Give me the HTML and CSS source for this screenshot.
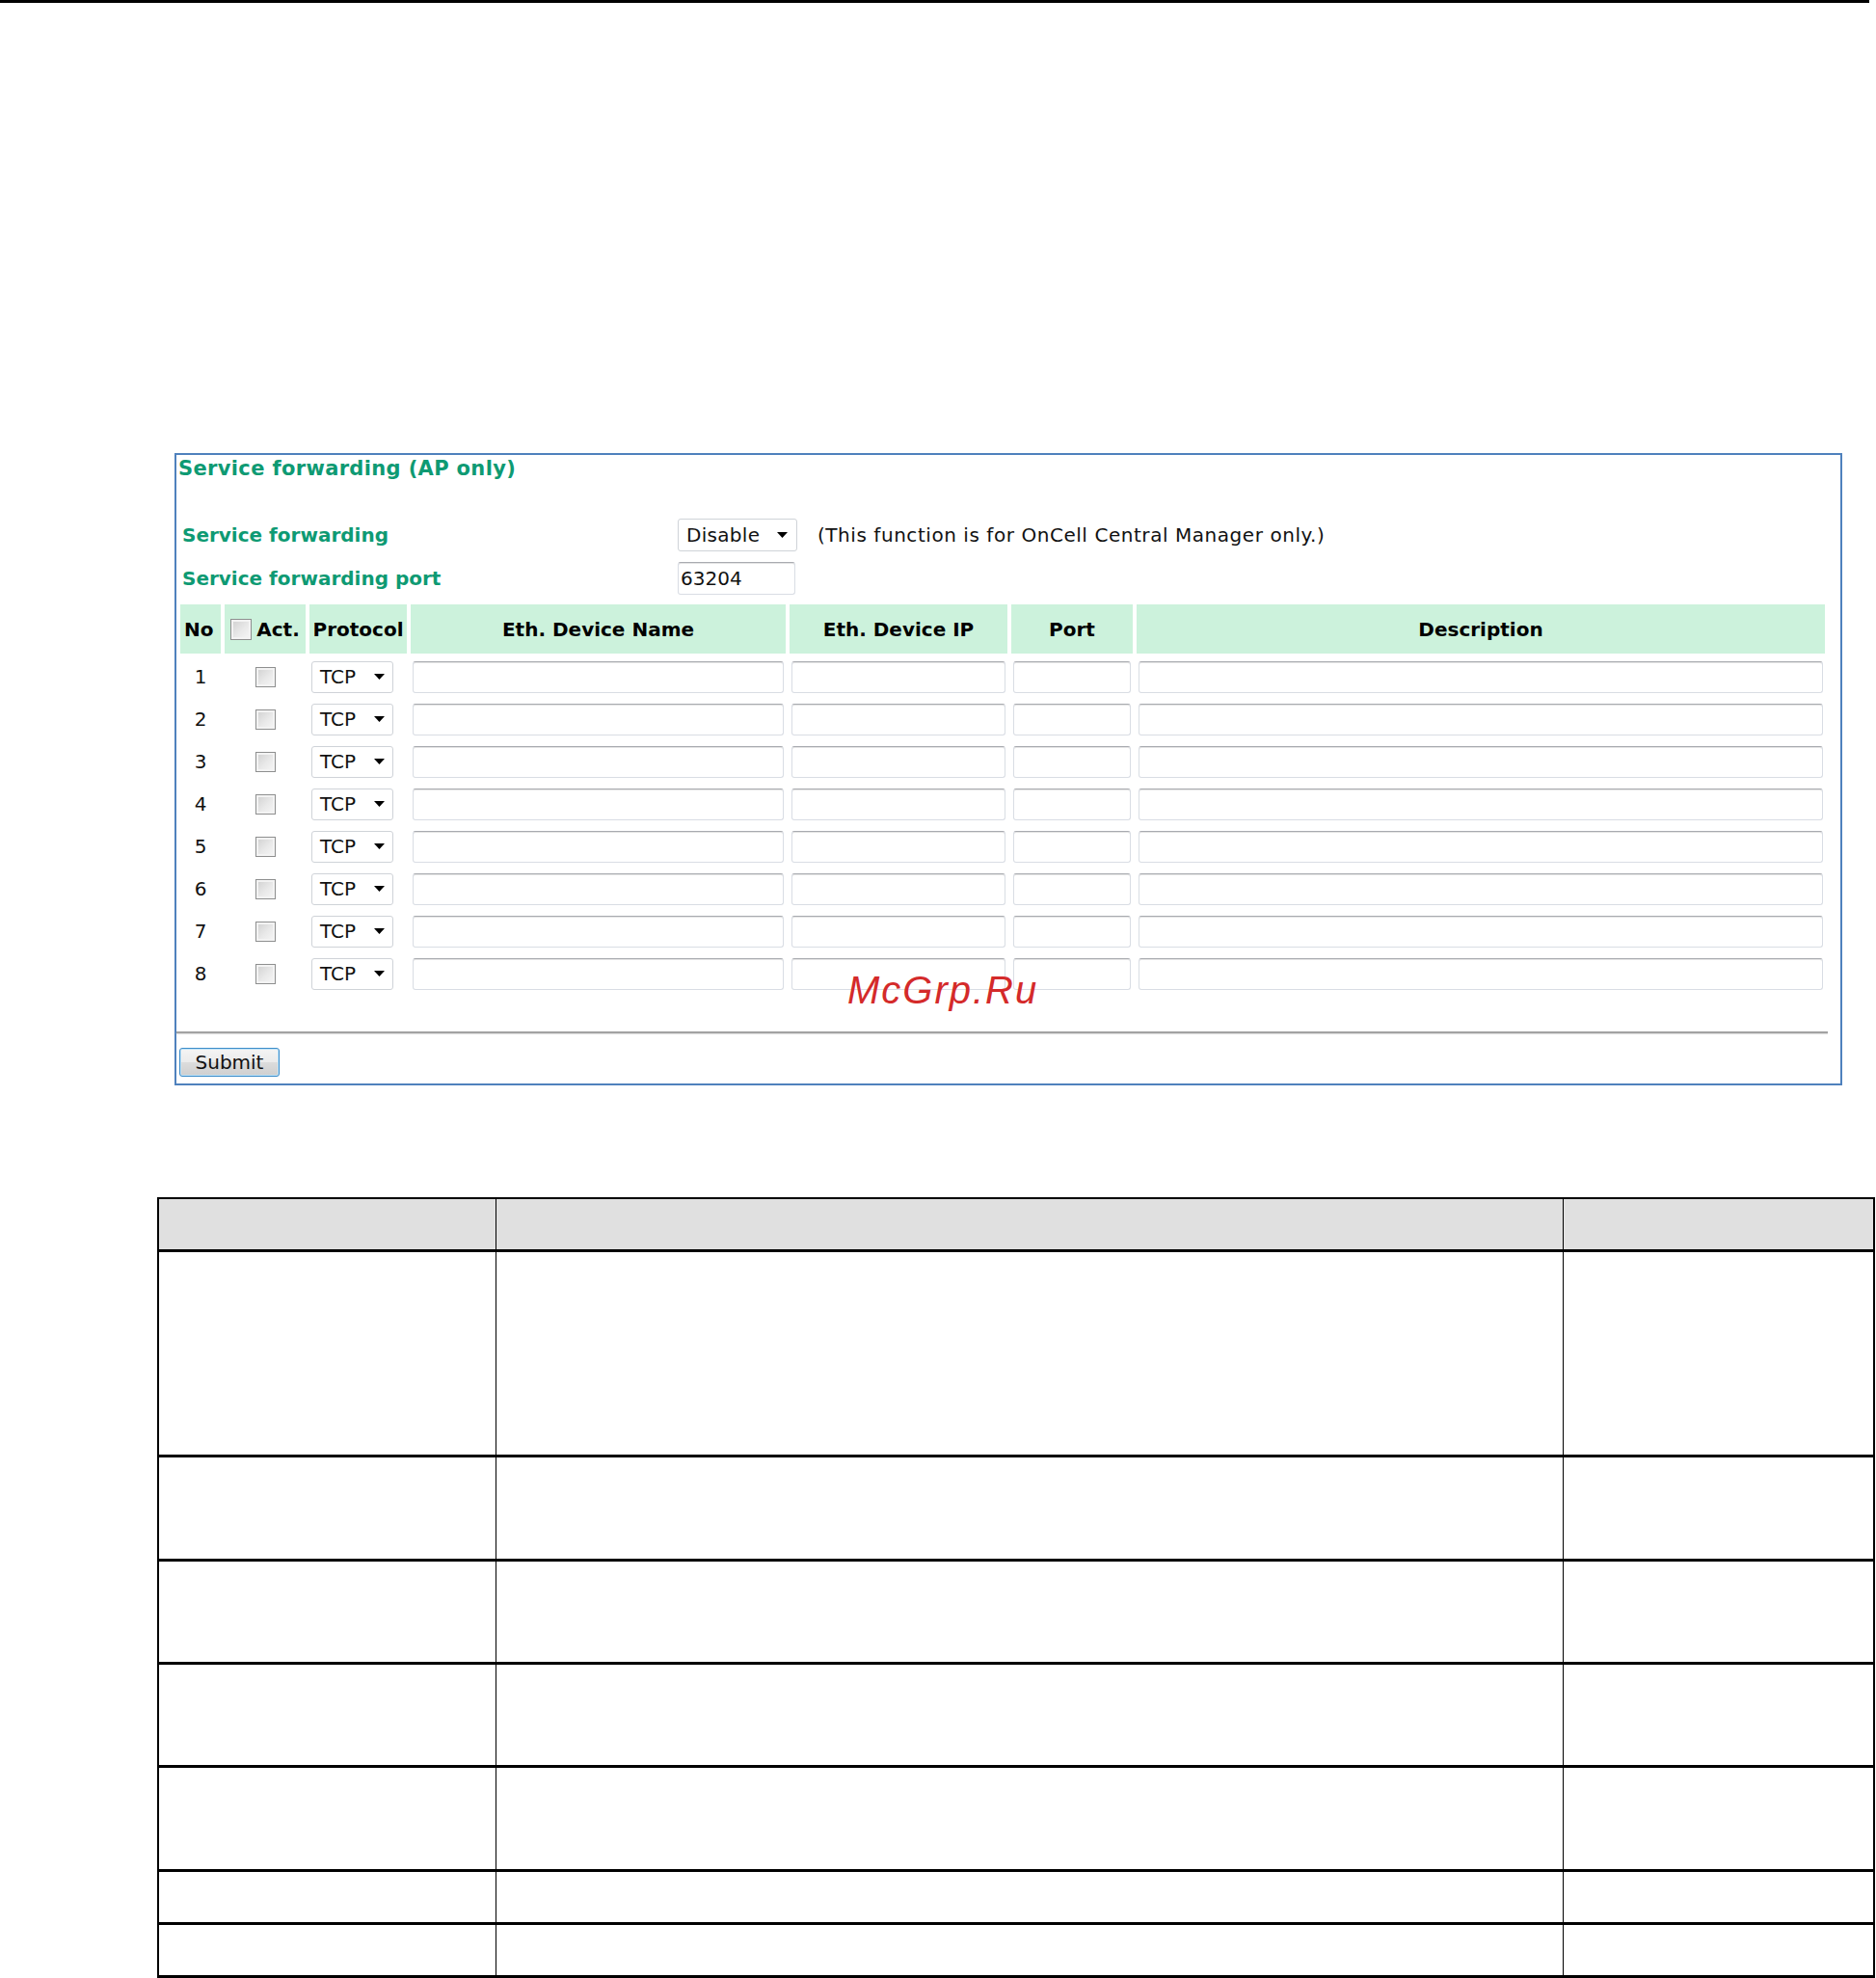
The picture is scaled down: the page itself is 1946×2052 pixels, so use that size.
FILE: index.html
```html
<!DOCTYPE html>
<html lang="en">
<head>
<meta charset="utf-8">
<title>Service forwarding (AP only)</title>
<link rel="stylesheet" href="styles.css">
</head>
<body>
<div class="topbar"></div>

<section class="panel">
  <h2 class="panel-title">Service forwarding (AP only)</h2>

  <div class="form-row">
    <span class="label">Service forwarding</span>
    <div class="select sel-disable"><span>Disable</span><svg class="arrow" width="11" height="6" viewBox="0 0 11 6"><polygon points="0,0 11,0 5.5,6" fill="#000"/></svg></div>
    <span class="note">(This function is for OnCell Central Manager only.)</span>
  </div>
  <div class="form-row">
    <span class="label">Service forwarding port</span>
    <div class="field port-field">63204</div>
  </div>

  <table class="fwd">
    <colgroup>
      <col class="c-no"><col class="c-act"><col class="c-proto"><col class="c-name"><col class="c-ip"><col class="c-port"><col class="c-desc">
    </colgroup>
    <thead>
      <tr>
        <th class="th-no">No</th>
        <th><span class="act-head"><span class="cb cb-head"></span><span>Act.</span></span></th>
        <th>Protocol</th>
        <th>Eth. Device Name</th>
        <th>Eth. Device IP</th>
        <th>Port</th>
        <th>Description</th>
      </tr>
    </thead>
    <tbody>
      <tr><td class="num">1</td><td class="act"><span class="cb"></span></td><td><div class="select sel-tcp"><span>TCP</span><svg class="arrow" width="11" height="6" viewBox="0 0 11 6"><polygon points="0,0 11,0 5.5,6" fill="#000"/></svg></div></td><td><div class="field"></div></td><td><div class="field"></div></td><td><div class="field"></div></td><td><div class="field"></div></td></tr>
      <tr><td class="num">2</td><td class="act"><span class="cb"></span></td><td><div class="select sel-tcp"><span>TCP</span><svg class="arrow" width="11" height="6" viewBox="0 0 11 6"><polygon points="0,0 11,0 5.5,6" fill="#000"/></svg></div></td><td><div class="field"></div></td><td><div class="field"></div></td><td><div class="field"></div></td><td><div class="field"></div></td></tr>
      <tr><td class="num">3</td><td class="act"><span class="cb"></span></td><td><div class="select sel-tcp"><span>TCP</span><svg class="arrow" width="11" height="6" viewBox="0 0 11 6"><polygon points="0,0 11,0 5.5,6" fill="#000"/></svg></div></td><td><div class="field"></div></td><td><div class="field"></div></td><td><div class="field"></div></td><td><div class="field"></div></td></tr>
      <tr><td class="num">4</td><td class="act"><span class="cb"></span></td><td><div class="select sel-tcp"><span>TCP</span><svg class="arrow" width="11" height="6" viewBox="0 0 11 6"><polygon points="0,0 11,0 5.5,6" fill="#000"/></svg></div></td><td><div class="field"></div></td><td><div class="field"></div></td><td><div class="field"></div></td><td><div class="field"></div></td></tr>
      <tr><td class="num">5</td><td class="act"><span class="cb"></span></td><td><div class="select sel-tcp"><span>TCP</span><svg class="arrow" width="11" height="6" viewBox="0 0 11 6"><polygon points="0,0 11,0 5.5,6" fill="#000"/></svg></div></td><td><div class="field"></div></td><td><div class="field"></div></td><td><div class="field"></div></td><td><div class="field"></div></td></tr>
      <tr><td class="num">6</td><td class="act"><span class="cb"></span></td><td><div class="select sel-tcp"><span>TCP</span><svg class="arrow" width="11" height="6" viewBox="0 0 11 6"><polygon points="0,0 11,0 5.5,6" fill="#000"/></svg></div></td><td><div class="field"></div></td><td><div class="field"></div></td><td><div class="field"></div></td><td><div class="field"></div></td></tr>
      <tr><td class="num">7</td><td class="act"><span class="cb"></span></td><td><div class="select sel-tcp"><span>TCP</span><svg class="arrow" width="11" height="6" viewBox="0 0 11 6"><polygon points="0,0 11,0 5.5,6" fill="#000"/></svg></div></td><td><div class="field"></div></td><td><div class="field"></div></td><td><div class="field"></div></td><td><div class="field"></div></td></tr>
      <tr><td class="num">8</td><td class="act"><span class="cb"></span></td><td><div class="select sel-tcp"><span>TCP</span><svg class="arrow" width="11" height="6" viewBox="0 0 11 6"><polygon points="0,0 11,0 5.5,6" fill="#000"/></svg></div></td><td><div class="field"></div></td><td><div class="field"></div></td><td><div class="field"></div></td><td><div class="field"></div></td></tr>
    </tbody>
  </table>

  <div class="rule"></div>
  <button class="submit" type="button">Submit</button>
</section>

<div class="watermark">McGrp.Ru</div>

<div class="spec">
  <div class="spec-row spec-head"><div class="cell"></div><div class="cell"></div><div class="cell"></div></div>
  <div class="spec-row h213"><div class="cell"></div><div class="cell"></div><div class="cell"></div></div>
  <div class="spec-row h108"><div class="cell"></div><div class="cell"></div><div class="cell"></div></div>
  <div class="spec-row h107"><div class="cell"></div><div class="cell"></div><div class="cell"></div></div>
  <div class="spec-row h107"><div class="cell"></div><div class="cell"></div><div class="cell"></div></div>
  <div class="spec-row h108"><div class="cell"></div><div class="cell"></div><div class="cell"></div></div>
  <div class="spec-row h55"><div class="cell"></div><div class="cell"></div><div class="cell"></div></div>
  <div class="spec-row h55"><div class="cell"></div><div class="cell"></div><div class="cell"></div></div>
</div>
</body>
</html>
```

FILE: styles.css
```css
html, body {
  margin: 0;
  padding: 0;
  background: #ffffff;
}

body {
  font-family: "DejaVu Sans", Verdana, sans-serif;
  color: #111111;
  position: relative;
}

.topbar {
  width: 1939px;
  height: 3px;
  background: #000000;
}

/* ---------- panel ---------- */
.panel {
  box-sizing: border-box;
  width: 1730px;
  margin: 467px 0 0 181px;
  border: 2px solid #4f81bd;
  padding: 2px 12px 7px 0;
}

.panel-title {
  margin: 0 0 34px 2px;
  font-size: 21px;
  line-height: 24px;
  font-weight: bold;
  letter-spacing: 0.35px;
  color: #0e9a73;
}

.form-row {
  display: flex;
  align-items: center;
  height: 45px;
  padding-left: 6px;
}

.label {
  width: 514px;
  flex: none;
  font-size: 20px;
  line-height: 24px;
  font-weight: bold;
  color: #0e9a73;
}

.note {
  margin-left: 21px;
  font-size: 20px;
  line-height: 24px;
  letter-spacing: 0.55px;
}

.select {
  box-sizing: border-box;
  display: flex;
  align-items: center;
  justify-content: space-between;
  background: #ffffff;
  border: 1px solid #cfd3d8;
  border-radius: 3px;
  font-size: 20px;
  line-height: 24px;
  color: #111111;
}

.sel-disable {
  width: 124px;
  height: 34px;
  padding: 0 9px 0 8px;
  letter-spacing: 0.3px;
}

.sel-tcp {
  width: 85px;
  height: 33px;
  margin-left: 2px;
  padding: 0 8px 0 8px;
}

.arrow {
  display: block;
  flex: none;
}

.field {
  box-sizing: border-box;
  height: 33px;
  margin: 0 2px;
  border: 1px solid #d9dde4;
  border-top-color: #a9abb0;
  border-radius: 3px;
  background: #ffffff;
  box-shadow: inset 0 1px 0 #e4e4e4;
}

.port-field {
  width: 122px;
  height: 34px;
  margin: 0;
  padding: 4px 0 0 2px;
  font-size: 20px;
  line-height: 24px;
  color: #111111;
}

/* ---------- forwarding table ---------- */
.fwd {
  margin-top: 1px;
  width: 1714px;
  table-layout: fixed;
  border-collapse: separate;
  border-spacing: 4px;
}

.c-no { width: 42px; }
.c-act { width: 84px; }
.c-proto { width: 101px; }
.c-name { width: 389px; }
.c-ip { width: 226px; }
.c-port { width: 126px; }
.c-desc { width: 714px; }

.fwd th {
  height: 51px;
  padding: 0;
  background: #ccf2dc;
  font-size: 20px;
  line-height: 24px;
  font-weight: bold;
  color: #000000;
  text-align: center;
  white-space: nowrap;
}

.fwd th.th-no {
  text-align: left;
  padding-left: 4px;
}

.act-head {
  display: inline-flex;
  align-items: center;
  vertical-align: middle;
}

.fwd td {
  height: 40px;
  padding: 0;
  vertical-align: middle;
}

.fwd td.num {
  text-align: center;
  font-size: 20px;
  line-height: 24px;
}

.fwd td.act {
  text-align: center;
}

.cb {
  display: inline-block;
  box-sizing: border-box;
  width: 21px;
  height: 21px;
  vertical-align: middle;
  border: 1px solid #8e8f8f;
  background: linear-gradient(135deg, #cfcfcf 0%, #e9e9e9 55%, #f7f7f7 100%);
  box-shadow: inset 0 0 0 2px #f3f3f3;
}

.cb-head {
  width: 22px;
  height: 22px;
  margin-right: 5px;
}

/* ---------- footer of panel ---------- */
.rule {
  margin-top: 36px;
  width: 1713px;
  height: 0;
  border-top: 2px solid #a2a2a2;
  box-shadow: 0 1px 1px #dcdcdc;
}

.submit {
  display: block;
  box-sizing: border-box;
  width: 104px;
  height: 30px;
  margin: 15px 0 0 3px;
  padding: 0;
  border: 1px solid #3c8cc8;
  border-radius: 3px;
  background: linear-gradient(#f4f4f4 0%, #ebebeb 50%, #dcdcdc 51%, #cfcfcf 100%);
  box-shadow: inset 0 0 0 1px #bfe3f8;
  font-family: "DejaVu Sans", Verdana, sans-serif;
  font-size: 20px;
  line-height: 24px;
  color: #111111;
}

.watermark {
  position: absolute;
  left: 879px;
  top: 1007px;
  font-family: "Liberation Sans", Arial, sans-serif;
  font-style: italic;
  font-size: 40px;
  line-height: 40px;
  letter-spacing: 2px;
  color: #d42a2a;
}

/* ---------- lower spec table ---------- */
.spec {
  box-sizing: border-box;
  width: 1782px;
  margin: 116px 0 0 163px;
  border-top: 2px solid #000000;
  border-left: 2px solid #000000;
  border-right: 2px solid #000000;
}

.spec-row {
  box-sizing: border-box;
  display: grid;
  grid-template-columns: 350px 1107px 1fr;
  border-bottom: 3px solid #000000;
}

.spec-row .cell {
  border-right: 1px solid #000000;
}

.spec-row .cell:last-child {
  border-right: 0;
}

.spec-head {
  height: 55px;
  background: #e0e0e0;
}

.h213 { height: 213px; }
.h108 { height: 108px; }
.h107 { height: 107px; }
.h55 { height: 55px; }
```
